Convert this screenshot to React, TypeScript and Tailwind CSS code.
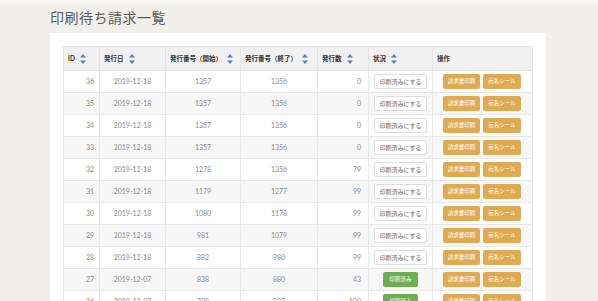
import React from "react";

type Row = {
  id: number;
  date: string;
  start: number;
  end: number;
  count: number;
  printed: boolean;
};

const rows: Row[] = [
  { id: 36, date: "2019-12-18", start: 1357, end: 1356, count: 0, printed: false },
  { id: 35, date: "2019-12-18", start: 1357, end: 1356, count: 0, printed: false },
  { id: 34, date: "2019-12-18", start: 1357, end: 1356, count: 0, printed: false },
  { id: 33, date: "2019-12-18", start: 1357, end: 1356, count: 0, printed: false },
  { id: 32, date: "2019-12-18", start: 1278, end: 1356, count: 79, printed: false },
  { id: 31, date: "2019-12-18", start: 1179, end: 1277, count: 99, printed: false },
  { id: 30, date: "2019-12-18", start: 1080, end: 1178, count: 99, printed: false },
  { id: 29, date: "2019-12-18", start: 981, end: 1079, count: 99, printed: false },
  { id: 28, date: "2019-12-18", start: 882, end: 980, count: 99, printed: false },
  { id: 27, date: "2019-12-07", start: 838, end: 880, count: 43, printed: true },
  { id: 26, date: "2019-12-07", start: 738, end: 837, count: 100, printed: true },
];

const SortIcon = () => (
  <svg width="6" height="10" viewBox="0 0 6 10" className="ml-[5px] shrink-0">
    <path d="M3 0 L6 3.5 L0 3.5Z" fill="#5b7cbc" />
    <path d="M0 6.5 L6 6.5 L3 10Z" fill="#5b7cbc" />
  </svg>
);

const Th = ({ label, sort = true }: { label: string; sort?: boolean }) => (
  <th className="border border-[#e3e3e3] px-[4px] text-left align-middle font-bold">
    <div className="flex items-center">
      <span>{label}</span>
      {sort && <SortIcon />}
    </div>
  </th>
);

const App: React.FC = () => {
  return (
    <div
      className="min-h-[301px] overflow-hidden border-t-[3px] border-[#f7f6f3] bg-[#f2f0eb] pl-[50px] pr-[52px]"
      style={{ fontFamily: "Lato, 'Noto Sans CJK JP', sans-serif" }}
    >
      {/* タイトル */}
      <h1 className="pt-[5px] text-[14px] leading-[20px] tracking-[0.5px] text-[#5a5a5a]">
        印刷待ち請求一覧
      </h1>

      {/* 一覧カード */}
      <div className="mt-[5px] h-[300px] bg-white p-[13px] shadow-[0_0_2px_rgba(0,0,0,0.06)]">
        <table className="w-full table-fixed border-collapse text-[6.5px] text-[#333333]">
          <colgroup>
            <col className="w-[36px]" />
            <col className="w-[66px]" />
            <col className="w-[75px]" />
            <col className="w-[77px]" />
            <col className="w-[51px]" />
            <col className="w-[64px]" />
            <col />
          </colgroup>
          <thead>
            <tr className="h-[24px] bg-[#f1f1f1]">
              <Th label="ID" />
              <Th label="発行日" />
              <Th label="発行番号（開始）" />
              <Th label="発行番号（終了）" />
              <Th label="発行数" />
              <Th label="状況" />
              <Th label="操作" sort={false} />
            </tr>
          </thead>
          <tbody className="text-[7px] text-[#8a8a8a]">
            {rows.map((r, i) => (
              <tr key={r.id} className={`h-[22px] ${i % 2 === 1 ? "bg-[#f7f7f7]" : "bg-white"}`}>
                <td className="border border-[#e8e8e8] pr-[5px] text-right">{r.id}</td>
                <td className="border border-[#e8e8e8] text-center">{r.date}</td>
                <td className="border border-[#e8e8e8] text-center">{r.start}</td>
                <td className="border border-[#e8e8e8] text-center">{r.end}</td>
                <td className="border border-[#e8e8e8] pr-[7px] text-right">{r.count}</td>
                <td className="border border-[#e8e8e8] text-center">
                  {r.printed ? (
                    <span className="inline-block h-[15px] w-[35px] rounded-[2px] bg-[#6caf52] text-[5.5px] leading-[15px] text-white">
                      印刷済み
                    </span>
                  ) : (
                    <span className="inline-block h-[15px] w-[53px] rounded-[2px] border border-[#dddddd] bg-white text-[6px] leading-[13px] text-[#666666]">
                      印刷済みにする
                    </span>
                  )}
                </td>
                <td className="border border-[#e8e8e8] text-center">
                  <div className="flex justify-center gap-[3px] pr-[1px]">
                    <span className="inline-block h-[15px] w-[37px] rounded-[2px] bg-[#dfaa52] text-[5.5px] leading-[15px] text-white">
                      請求書印刷
                    </span>
                    <span className="inline-block h-[15px] w-[38px] rounded-[2px] bg-[#dfaa52] text-[5.5px] leading-[15px] text-white">
                      宛名シール
                    </span>
                  </div>
                </td>
              </tr>
            ))}
          </tbody>
        </table>
      </div>
    </div>
  );
};

export default App;
